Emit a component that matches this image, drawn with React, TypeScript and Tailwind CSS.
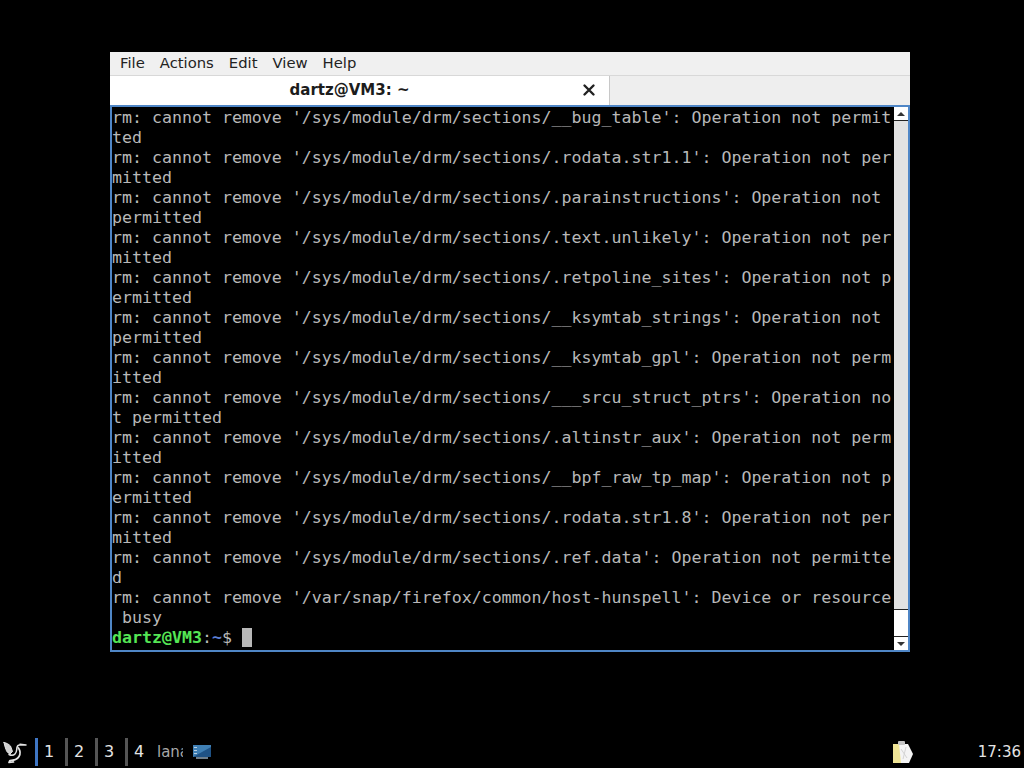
import React from 'react';

const lines = [
  "rm: cannot remove '/sys/module/drm/sections/__bug_table': Operation not permit",
  'ted',
  "rm: cannot remove '/sys/module/drm/sections/.rodata.str1.1': Operation not per",
  'mitted',
  "rm: cannot remove '/sys/module/drm/sections/.parainstructions': Operation not",
  'permitted',
  "rm: cannot remove '/sys/module/drm/sections/.text.unlikely': Operation not per",
  'mitted',
  "rm: cannot remove '/sys/module/drm/sections/.retpoline_sites': Operation not p",
  'ermitted',
  "rm: cannot remove '/sys/module/drm/sections/__ksymtab_strings': Operation not",
  'permitted',
  "rm: cannot remove '/sys/module/drm/sections/__ksymtab_gpl': Operation not perm",
  'itted',
  "rm: cannot remove '/sys/module/drm/sections/___srcu_struct_ptrs': Operation no",
  't permitted',
  "rm: cannot remove '/sys/module/drm/sections/.altinstr_aux': Operation not perm",
  'itted',
  "rm: cannot remove '/sys/module/drm/sections/__bpf_raw_tp_map': Operation not p",
  'ermitted',
  "rm: cannot remove '/sys/module/drm/sections/.rodata.str1.8': Operation not per",
  'mitted',
  "rm: cannot remove '/sys/module/drm/sections/.ref.data': Operation not permitte",
  'd',
  "rm: cannot remove '/var/snap/firefox/common/host-hunspell': Device or resource",
  ' busy',
];

const Workspace = ({ n, active }: { n: string; active?: boolean }) => (
  <div className="flex items-center h-[28px] w-[30px]">
    <div className={active ? 'w-[3px] h-[28px] bg-[#3f76c4]' : 'w-[3px] h-[28px] bg-[#555555]'} />
    <span className="ml-[6px] text-[16px] text-[#e4e4e4]">{n}</span>
  </div>
);

const Bird = () => (
  <svg width="24" height="24" viewBox="0 0 24 24" fill="none" stroke="#e4e4e4" strokeLinecap="round" strokeLinejoin="round">
    {/* wing */}
    <path d="M1 2.500c3 .5 5 2 6.500 3.500l2 5.500-2.500 2.500C4 12.500 3.500 11 3 9.500 2 7 1.500 5 1 2.500z" fill="#d0d0d0" strokeWidth="1" />
    {/* neck and tail */}
    <path d="M6 14.500c2 1 4.500 1 6-.5 2-2 1.500-4 2-6.500.3-1.500 1.200-2.500 2.500-2.500l6.500 0-6-.8" strokeWidth="1.500" />
    <path d="M15.500 8c2 3 2 6 .5 8.500-1.500 2.500-4.500 4-9 4l-1 2 4.500-.5" strokeWidth="1.700" />
  </svg>
);

const Notes = () => (
  <svg width="20" height="23" viewBox="0 0 20 23">
    <rect x="0" y="3" width="15" height="19" fill="#f0e596" />
    <path d="M6 3h9l5 10-4 9H8z" fill="#f4f4f4" />
    <rect x="5" y="0" width="7" height="4" rx="1" fill="#c4c4c4" />
    <path d="M8 8l6 9M13 6l-3 12" stroke="#d4d4d4" strokeWidth="1" />
  </svg>
);

const Desktop = () => (
  <svg width="18" height="15" viewBox="0 0 18 15">
    <rect x="0" y="0" width="18" height="12" fill="#3f7fb4" />
    <path d="M0 12L18 2v10z" fill="#1f5285" />
    <rect x="1" y="2" width="3" height="1" fill="#b8d0e4" />
    <rect x="1" y="5" width="3" height="1" fill="#b8d0e4" />
    <rect x="1" y="8" width="3" height="1" fill="#b8d0e4" />
    <rect x="3" y="12" width="12" height="2" fill="#6f7f8c" />
  </svg>
);

export default function App() {
  return (
    <div className="relative w-[1024px] h-[768px] bg-black overflow-hidden font-['DejaVu_Sans',sans-serif]">
      {/* terminal window */}
      <div className="absolute left-[110px] top-[52px] w-[800px] h-[600px] flex flex-col">
        <div className="h-[23px] bg-[#f0f0f0] flex items-center pl-[10px] gap-[15px] text-[14.8px] text-[#222222] shrink-0">
          <span>File</span>
          <span>Actions</span>
          <span>Edit</span>
          <span>View</span>
          <span>Help</span>
        </div>
        <div className="h-[30px] bg-[#eeeeee] border-t border-[#d8d8d8] flex shrink-0">
          <div className="w-[500px] h-[29px] bg-white border-r border-[#c8c8c8] relative flex items-center justify-center font-bold text-[15px] text-[#1c1c1c]">
            <span className="pr-[20px]">dartz@VM3: ~</span>
            <span className="absolute right-[13px] top-[7px]">
              <svg width="14" height="14" viewBox="0 0 14 14" stroke="#222222" strokeWidth="2.4" strokeLinecap="round">
                <path d="M2.500 2.500l9 9M11.500 2.500l-9 9" />
              </svg>
            </span>
          </div>
        </div>
        <div className="flex-1 min-h-0 flex bg-black border-2 border-[#4f86c6]">
          <div className="w-[782px] pt-[1px] font-['DejaVu_Sans_Mono',monospace] text-[16.6px] leading-[20px] text-[#b8b8b8] whitespace-pre">
            {lines.map((l, i) => (
              <div key={i} className="h-[20px]">{l}</div>
            ))}
            <div className="h-[20px] flex">
              <span className="text-[#55e655] font-bold">dartz@VM3</span>
              <span>:</span>
              <span className="text-[#5c7fd6] font-bold">~</span>
              <span>$ </span>
              <span className="w-[10px] h-[19px] bg-[#b8b8b8]" />
            </div>
          </div>
          <div className="w-[14px] ml-auto flex flex-col bg-white">
            <div className="h-[14px] flex items-center justify-center border-b border-[#222222]">
              <div className="w-0 h-0 border-l-[4px] border-r-[4px] border-b-[4px] border-l-transparent border-r-transparent border-b-[#333333]" />
            </div>
            <div className="flex-1 bg-[#e2e2e2]" />
            <div className="h-[27px] bg-white border-t border-[#222222]" />
            <div className="h-[14px] flex items-center justify-center border-t border-[#222222]">
              <div className="w-0 h-0 border-l-[4px] border-r-[4px] border-t-[4px] border-l-transparent border-r-transparent border-t-[#333333]" />
            </div>
          </div>
        </div>
      </div>

      {/* panel */}
      <div className="absolute left-0 right-0 bottom-0 h-[32px] flex items-center text-[#e4e4e4]">
        <div className="w-[35px] pl-[3px]"><Bird /></div>
        <Workspace n="1" active />
        <Workspace n="2" />
        <Workspace n="3" />
        <Workspace n="4" />
        <div className="w-[26px] ml-[2px] overflow-hidden text-[15px] text-[#a8a8a8] whitespace-nowrap">lana</div>
        <div className="ml-[10px] flex"><Desktop /></div>
        <div className="ml-[682px] flex"><Notes /></div>
        <span className="absolute right-[3px] text-[15px] text-[#e4e4e4]">17:36</span>
      </div>
    </div>
  );
}
